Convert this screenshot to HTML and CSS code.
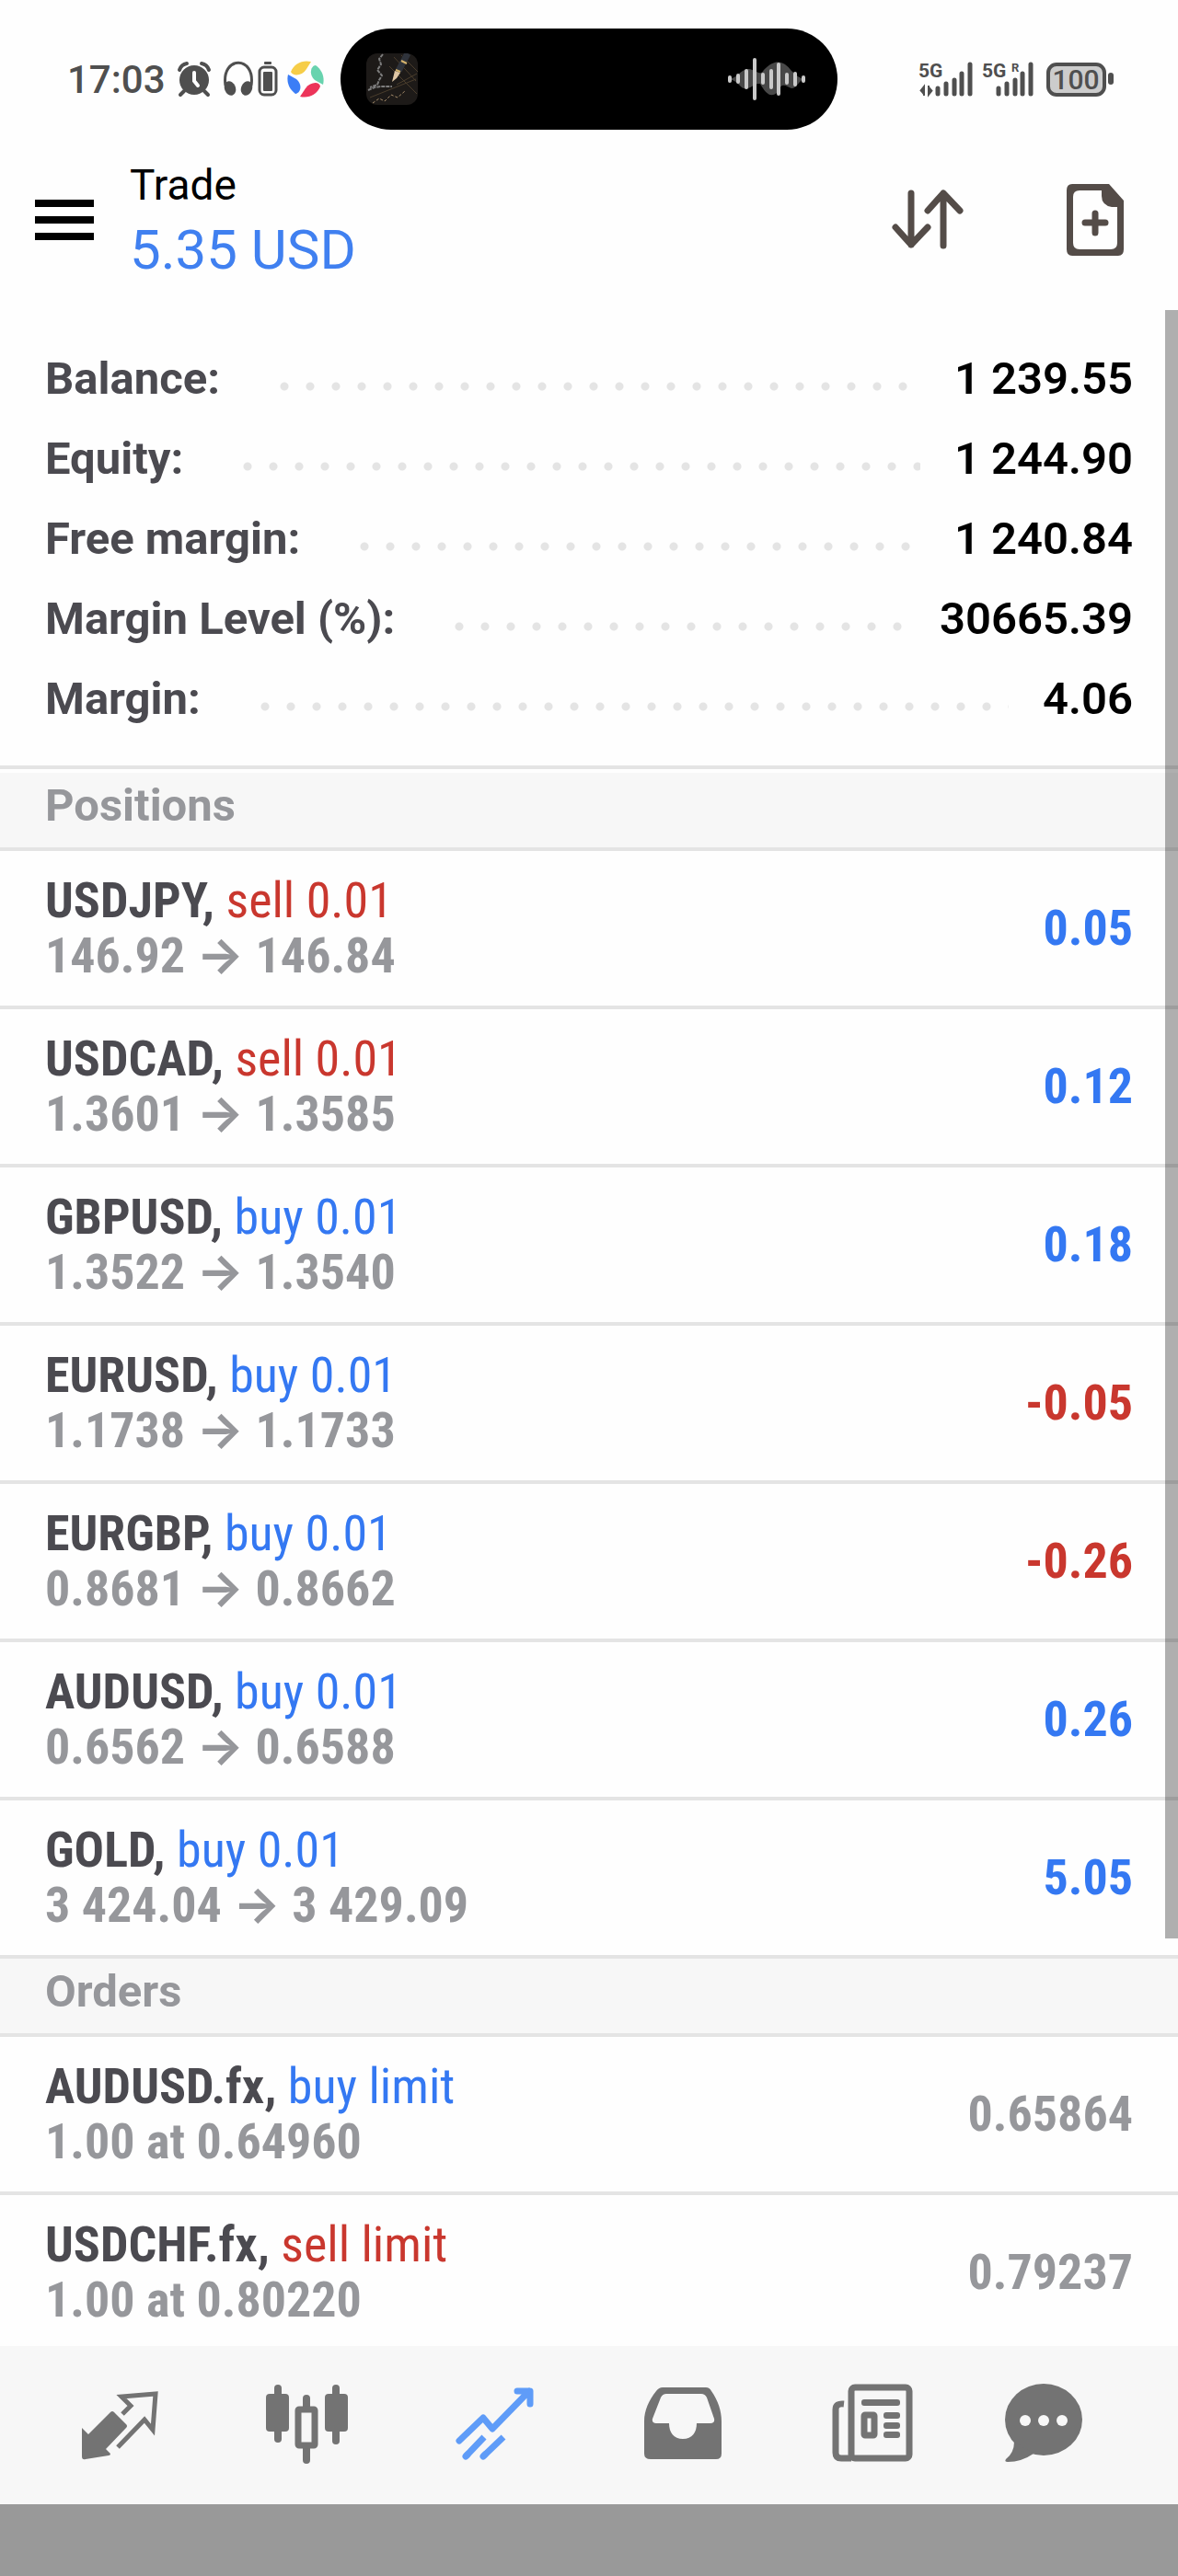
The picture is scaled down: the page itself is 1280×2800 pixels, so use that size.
FILE: index.html
```html
<!DOCTYPE html>
<html lang="en">
<head>
    <meta charset="UTF-8">
    <meta name="viewport" content="width=device-width, initial-scale=1.0">
    <title>Trade</title>
    <link rel="stylesheet" href="styles.css">
</head>
<body>
    <div class="app">
        <div class="status-bar">
            <div class="status-left">
                <span class="clock">17:03</span>
                <svg class="alarm" width="38" height="40" viewBox="0 0 38 40">
                    <circle cx="19" cy="21" r="16" fill="#4f4f4f"/>
                    <path d="M3 10 Q5 4 11 3 M35 10 Q33 4 27 3 M8 33 L4 37 M30 33 L34 37" fill="none" stroke="#4f4f4f" stroke-width="4" stroke-linecap="round"/>
                    <path d="M19 13 V22 L23 27" fill="none" stroke="#fff" stroke-width="4" stroke-linecap="round"/>
                </svg>
                <svg class="headphones" width="34" height="40" viewBox="0 0 34 40">
                    <path d="M3 27 C-2 -6 36 -6 31 27" fill="none" stroke="#4f4f4f" stroke-width="3"/>
                    <ellipse cx="8" cy="30" rx="6" ry="8" transform="rotate(-20 8 30)" fill="#4f4f4f"/>
                    <ellipse cx="26" cy="30" rx="6" ry="8" transform="rotate(20 26 30)" fill="#4f4f4f"/>
                </svg>
                <svg class="mini-battery" width="22" height="40" viewBox="0 0 22 40">
                    <rect x="7" y="1" width="8" height="3" rx="1" fill="#4f4f4f"/>
                    <rect x="2" y="7" width="18" height="30" rx="5" fill="none" stroke="#4f4f4f" stroke-width="3"/>
                    <rect x="6" y="12" width="10" height="21" rx="1" fill="#4f4f4f"/>
                </svg>
                <svg class="pinwheel" width="40" height="42" viewBox="0 0 40 42">
                    <path d="M4 13 C8 4 16 0 26 2 L21 10 C16 18 6 18 4 13 Z" fill="#f6cd48"/>
                    <path d="M31 6 C38 11 41 19 39 27 L30 22 C23 16 26 6 31 6 Z" fill="#68d3ae"/>
                    <path d="M36 29 C32 38 24 42 14 40 L20 31 C25 24 35 23 36 29 Z" fill="#ec3459"/>
                    <path d="M9 37 C2 32 -1 24 1 16 L10 21 C17 27 15 36 9 37 Z" fill="#3b7df6"/>
                </svg>
            </div>
            <div class="island">
                <svg width="56" height="56" viewBox="0 0 56 56">
                    <rect width="56" height="56" rx="12" fill="#1d1a18"/>
                    <path d="M30 4 L54 30 M38 2 L56 20 M25 14 L55 44 M33 34 L55 22 M4 48 L54 28" stroke="#4a3d2c" stroke-width="1"/>
                    <path d="M18 1 L14 6 L16 12 L12 18 L17 24 L14 29 L12 34 L4 37 M2 40 L9 37 L16 36 L28 36" fill="none" stroke="#7d7d7d" stroke-width="2" stroke-dasharray="4 1"/>
                    <path d="M7 54 L14 49 L20 52 L27 45 L34 48 L42 41" fill="none" stroke="#a58c6b" stroke-width="1" stroke-dasharray="3 2"/>
                    <path d="M45 0 L35 19" stroke="#2f333b" stroke-width="7"/>
                    <path d="M38 8 L44 11 M32 18 L37 20" stroke="#d5b36c" stroke-width="2"/>
                    <path d="M31 19 L37 21 L33 27 L28 31 Z" fill="#dfc6a4"/>
                </svg>
                <svg width="90" height="52" viewBox="0 0 90 52">
                    <path d="M5 26 C14 24 18 14 26 15 C35 17 38 23 42 16 C54 3 64 6 72 17 C78 23 82 25 85 26 C78 30 78 36 72 36 C66 34 62 28 57 40 C50 47 44 42 38 31 C30 30 26 40 18 35 C13 30 10 27 5 26 Z" fill="#484848"/>
                    <path d="M5 24 V28 M14 22 V29 M23 17 V35 M32 5 V47 M41 21 V30 M50 17 V35 M58 10 V42 M67 21 V30 M76 20 V32 M85 24 V28" stroke="#c9c9c9" stroke-width="4" stroke-linecap="round"/>
                </svg>
            </div>
            <div class="status-right">
                <svg width="62" height="44" viewBox="0 0 62 44">
                    <text class="net" x="1" y="20">5G</text>
                    <path d="M3 35 L7 30 V40 M16 34 L12 39 V29" fill="#4f4f4f" stroke="#4f4f4f" stroke-width="2"/>
                    <path d="M22 32 V38 M31 27 V38 M40 23 V38 M48 16 V38 M57 6 V38" stroke="#4f4f4f" stroke-width="5" stroke-linecap="round"/>
                </svg>
                <svg width="62" height="44" viewBox="0 0 62 44">
                    <text class="net" x="1" y="20">5G</text>
                    <text class="net-small" x="33" y="14">R</text>
                    <path d="M19 32 V38 M28 27 V38 M37 23 V38 M45 16 V38 M54 6 V38" stroke="#4f4f4f" stroke-width="5" stroke-linecap="round"/>
                </svg>
                <svg class="battery" width="76" height="44" viewBox="0 0 76 44">
                    <rect x="4" y="6" width="61" height="33" rx="9" fill="#ccc" stroke="#4f4f4f" stroke-width="4"/>
                    <rect x="69" y="15" width="6" height="13" rx="3" fill="#4f4f4f"/>
                    <text class="charge" x="34" y="33">100</text>
                </svg>
            </div>
        </div>

        <header class="header">
            <button class="menu-btn" aria-label="Menu"><span></span><span></span><span></span></button>
            <div class="title">
                <h1>Trade</h1>
                <p>5.35 USD</p>
            </div>
            <button class="icon-btn" aria-label="Sort">
                <svg width="94" height="80" viewBox="0 0 94 80" fill="none" stroke="#544c48" stroke-width="7" stroke-linecap="round" stroke-linejoin="round">
                    <path d="M29 11 V67 M12 48 L29 67 L47 48 M64 68 V11 M47 30 L64 11 L82 30"/>
                </svg>
            </button>
            <button class="icon-btn" aria-label="New order">
                <svg width="80" height="94" viewBox="0 0 80 94">
                    <path fill="#544c48" fill-rule="evenodd" d="M15 8 H55 L71 26 V79 Q71 86 65 86 H15 Q9 86 9 79 V15 Q9 8 15 8 Z M23 15 Q16 15 16 22 V72 Q16 79 23 79 H57 Q64 79 64 72 V33 H58 Q47 31 47 21 V15 Z"/>
                    <path d="M40 40 V61 M29 50 H51" stroke="#544c48" stroke-width="7" stroke-linecap="round"/>
                </svg>
            </button>
        </header>

        <main class="content">
            <dl class="summary">
                <div class="summary-row"><dt>Balance:</dt><dd>1 239.55</dd></div>
                <div class="summary-row"><dt>Equity:</dt><dd>1 244.90</dd></div>
                <div class="summary-row"><dt>Free margin:</dt><dd>1 240.84</dd></div>
                <div class="summary-row"><dt>Margin Level (%):</dt><dd>30665.39</dd></div>
                <div class="summary-row"><dt>Margin:</dt><dd>4.06</dd></div>
            </dl>

            <h2>Positions</h2>
            <ul class="trades">
                <li>
                    <div><p class="symbol">USDJPY, <span class="sell">sell 0.01</span></p><p class="price">146.92 → 146.84</p></div>
                    <span class="profit up">0.05</span>
                </li>
                <li>
                    <div><p class="symbol">USDCAD, <span class="sell">sell 0.01</span></p><p class="price">1.3601 → 1.3585</p></div>
                    <span class="profit up">0.12</span>
                </li>
                <li>
                    <div><p class="symbol">GBPUSD, <span class="buy">buy 0.01</span></p><p class="price">1.3522 → 1.3540</p></div>
                    <span class="profit up">0.18</span>
                </li>
                <li>
                    <div><p class="symbol">EURUSD, <span class="buy">buy 0.01</span></p><p class="price">1.1738 → 1.1733</p></div>
                    <span class="profit down">-0.05</span>
                </li>
                <li>
                    <div><p class="symbol">EURGBP, <span class="buy">buy 0.01</span></p><p class="price">0.8681 → 0.8662</p></div>
                    <span class="profit down">-0.26</span>
                </li>
                <li>
                    <div><p class="symbol">AUDUSD, <span class="buy">buy 0.01</span></p><p class="price">0.6562 → 0.6588</p></div>
                    <span class="profit up">0.26</span>
                </li>
                <li>
                    <div><p class="symbol">GOLD, <span class="buy">buy 0.01</span></p><p class="price">3 424.04 → 3 429.09</p></div>
                    <span class="profit up">5.05</span>
                </li>
            </ul>

            <h2>Orders</h2>
            <ul class="trades">
                <li>
                    <div><p class="symbol">AUDUSD.fx, <span class="buy">buy limit</span></p><p class="price">1.00 at 0.64960</p></div>
                    <span class="profit">0.65864</span>
                </li>
                <li>
                    <div><p class="symbol">USDCHF.fx, <span class="sell">sell limit</span></p><p class="price">1.00 at 0.80220</p></div>
                    <span class="profit">0.79237</span>
                </li>
            </ul>
            <div class="scrollbar"></div>
        </main>

        <nav class="tabs">
            <a href="#" aria-label="Quotes">
                <svg width="120" height="104" viewBox="0 0 120 104">
                    <path d="M19 55 L26 62 L50 38 Q52 36 54 38 L67 51 Q69 53 67 55 L45 78 L50 83 Q50 85 48 85 L23 89 Q19 90 19 86 Z" fill="#737373"/>
                    <path d="M63 40 L72 31 L62 21 L99 18 L96 57 L87 46 L58 76" fill="none" stroke="#737373" stroke-width="5"/>
                </svg>
            </a>
            <a href="#" aria-label="Charts">
                <svg width="120" height="104" viewBox="0 0 120 104">
                    <rect x="24" y="8" width="8" height="63" rx="4" fill="#737373"/>
                    <rect x="15" y="18" width="25" height="41" rx="4" fill="#737373"/>
                    <rect x="87" y="8" width="8" height="65" rx="4" fill="#737373"/>
                    <rect x="79" y="18" width="25" height="41" rx="4" fill="#737373"/>
                    <path d="M59 23 V33 M59 76 V90" stroke="#737373" stroke-width="8" stroke-linecap="round"/>
                    <rect x="50" y="35" width="18" height="39" rx="1" fill="none" stroke="#737373" stroke-width="7"/>
                </svg>
            </a>
            <a href="#" class="active" aria-label="Trade">
                <svg width="120" height="104" viewBox="0 0 120 104" fill="none" stroke="#5f9cf8" stroke-width="7">
                    <path d="M21 69 L47 44 L57 56 L97 15 M84 15 H98 V29" stroke-linecap="round" stroke-linejoin="round"/>
                    <path d="M28 86 L48 65 M47 86 L69 65"/>
                    <path d="M28 86 L30 84 M47 86 L49 84" stroke-linecap="round"/>
                </svg>
            </a>
            <a href="#" aria-label="History">
                <svg width="120" height="104" viewBox="0 0 120 104">
                    <path fill="#737373" fill-rule="evenodd" d="M38 11 H85 Q89 11 91 15 C98 25 102 36 102 48 V83 Q102 89 96 89 H25 Q18 89 18 83 V48 C18 36 23 25 31 15 Q34 11 38 11 Z M42 18 Q38 18 36 22 L27 45 Q26 50 31 50 H45 C45 60 50 67 60 67 S75 60 75 50 H90 Q95 50 94 45 L86 22 Q84 18 80 18 Z"/>
                </svg>
            </a>
            <a href="#" aria-label="News">
                <svg width="120" height="104" viewBox="0 0 120 104">
                    <rect x="39" y="11" width="63" height="77" rx="4" fill="none" stroke="#737373" stroke-width="7"/>
                    <path d="M31 29 Q22 28 22 35 V82 Q22 88 28 88 H39" fill="none" stroke="#737373" stroke-width="7"/>
                    <rect x="50" y="24" width="42" height="7" rx="3" fill="#737373"/>
                    <rect x="53" y="41" width="11" height="22" rx="1" fill="none" stroke="#737373" stroke-width="7"/>
                    <rect x="74" y="38" width="18" height="7" rx="3" fill="#737373"/>
                    <rect x="74" y="49" width="18" height="7" rx="3" fill="#737373"/>
                    <rect x="74" y="59" width="18" height="7" rx="3" fill="#737373"/>
                </svg>
            </a>
            <a href="#" aria-label="Messages">
                <svg width="120" height="104" viewBox="0 0 120 104">
                    <ellipse cx="44" cy="46" rx="42" ry="39" fill="#737373"/>
                    <path d="M12 70 Q12 82 3 89 Q1 92 5 92 Q20 92 33 83 Z" fill="#737373"/>
                    <circle cx="24" cy="47" r="6" fill="#f7f7f7"/>
                    <circle cx="44" cy="47" r="6" fill="#f7f7f7"/>
                    <circle cx="64" cy="47" r="6" fill="#f7f7f7"/>
                </svg>
            </a>
        </nav>
        <div class="system-bar"></div>
    </div>
</body>
</html>
```
FILE: styles.css
```css
* {
    margin: 0;
    padding: 0;
    box-sizing: border-box;
}

body {
    font-family: Roboto, sans-serif;
    background: #fefefe;
    color: #4b4a50;
}

svg {
    display: block;
    flex: none;
}

button {
    border: none;
    background: none;
    cursor: pointer;
}

.app {
    display: flex;
    flex-direction: column;
    height: 100vh;
}

/* Status bar */
.status-bar {
    display: grid;
    grid-template-columns: 1fr minmax(0, 540px) 1fr;
    align-items: center;
    height: 172px;
    flex: none;
}

.status-left,
.status-right {
    display: flex;
    align-items: center;
}

.status-left {
    padding-left: 73px;
}

.status-right {
    justify-content: flex-end;
    gap: 7px;
    padding-right: 69px;
}

.clock {
    font-size: 42px;
    font-weight: 500;
    color: #4f4f4f;
}

.alarm {
    margin-left: 12px;
}

.headphones {
    margin-left: 12px;
}

.mini-battery {
    margin-left: 4px;
}

.pinwheel {
    margin-left: 10px;
}

.island {
    display: flex;
    align-items: center;
    justify-content: space-between;
    height: 110px;
    padding: 0 32px 0 28px;
    border-radius: 55px;
    background: #000;
}

.net,
.net-small,
.charge {
    font-weight: 700;
    fill: #4f4f4f;
}

.net {
    font-size: 21px;
}

.net-small {
    font-size: 13px;
}

.charge {
    font-size: 30px;
    font-weight: 500;
    text-anchor: middle;
}

/* Header */
.header {
    display: flex;
    align-items: center;
    height: 165px;
    padding: 0 50px 31px 38px;
    flex: none;
}

.menu-btn {
    display: flex;
    flex-direction: column;
    gap: 10px;
    width: 64px;
}

.menu-btn span {
    height: 8px;
    background: #000;
}

.title {
    flex: 1;
    padding-left: 39px;
}

.title h1 {
    font-size: 46px;
    font-weight: 400;
    line-height: 66px;
    color: #000;
}

.title p {
    font-size: 60px;
    line-height: 76px;
    color: #4080f0;
}

.icon-btn + .icon-btn {
    margin-left: 95px;
}

/* Account summary */
.content {
    position: relative;
    flex: 1;
    min-height: 0;
    overflow: hidden;
}

.summary {
    padding: 31px 49px 29px;
    border-bottom: 4px solid #e4e4e4;
    margin-bottom: 4px;
}

.summary-row {
    display: flex;
    font-size: 49px;
    font-weight: 700;
    line-height: 87px;
}

.summary-row::before {
    content: "";
    order: 1;
    flex: 1;
    margin: 0 37px 0 56px;
    background: radial-gradient(circle at 14px 52px, #e4e4e4 4px, transparent 5px) 0 0 / 28px 87px repeat-x;
}

.summary-row dd {
    order: 2;
    font-weight: 600;
    color: #000;
}

/* Positions and orders */
.content h2 {
    padding: 0 49px 10px;
    border-bottom: 4px solid #e4e4e4;
    background: #f7f7f7;
    font-size: 49px;
    font-weight: 700;
    line-height: 71px;
    color: #96979b;
}

.trades {
    list-style: none;
    /* Inter supplies the arrow glyph */
    font-family: "Roboto Condensed", Inter, sans-serif;
    font-size: 54px;
    font-weight: 700;
    line-height: 60px;
}

.trades li {
    display: flex;
    align-items: center;
    justify-content: space-between;
    height: 172px;
    padding: 0 49px;
    border-bottom: 4px solid #e4e4e4;
}

.trades span {
    font-weight: 400;
}

.trades .profit {
    font-weight: 700;
}

.price,
.profit {
    color: #96979b;
}

.buy,
.up {
    color: #3478f2;
}

.sell,
.down {
    color: #c9372e;
}

.scrollbar {
    position: absolute;
    top: 0;
    right: 0;
    width: 14px;
    height: 80%;
    background: rgba(0, 0, 0, 0.31);
}

/* Bottom navigation */
.tabs {
    display: flex;
    height: 172px;
    padding: 0 28px;
    background: #f7f7f7;
    flex: none;
}

.tabs a {
    display: flex;
    flex: 1;
    align-items: center;
    justify-content: center;
}

.system-bar {
    height: 78px;
    background: #999;
    flex: none;
}
```
